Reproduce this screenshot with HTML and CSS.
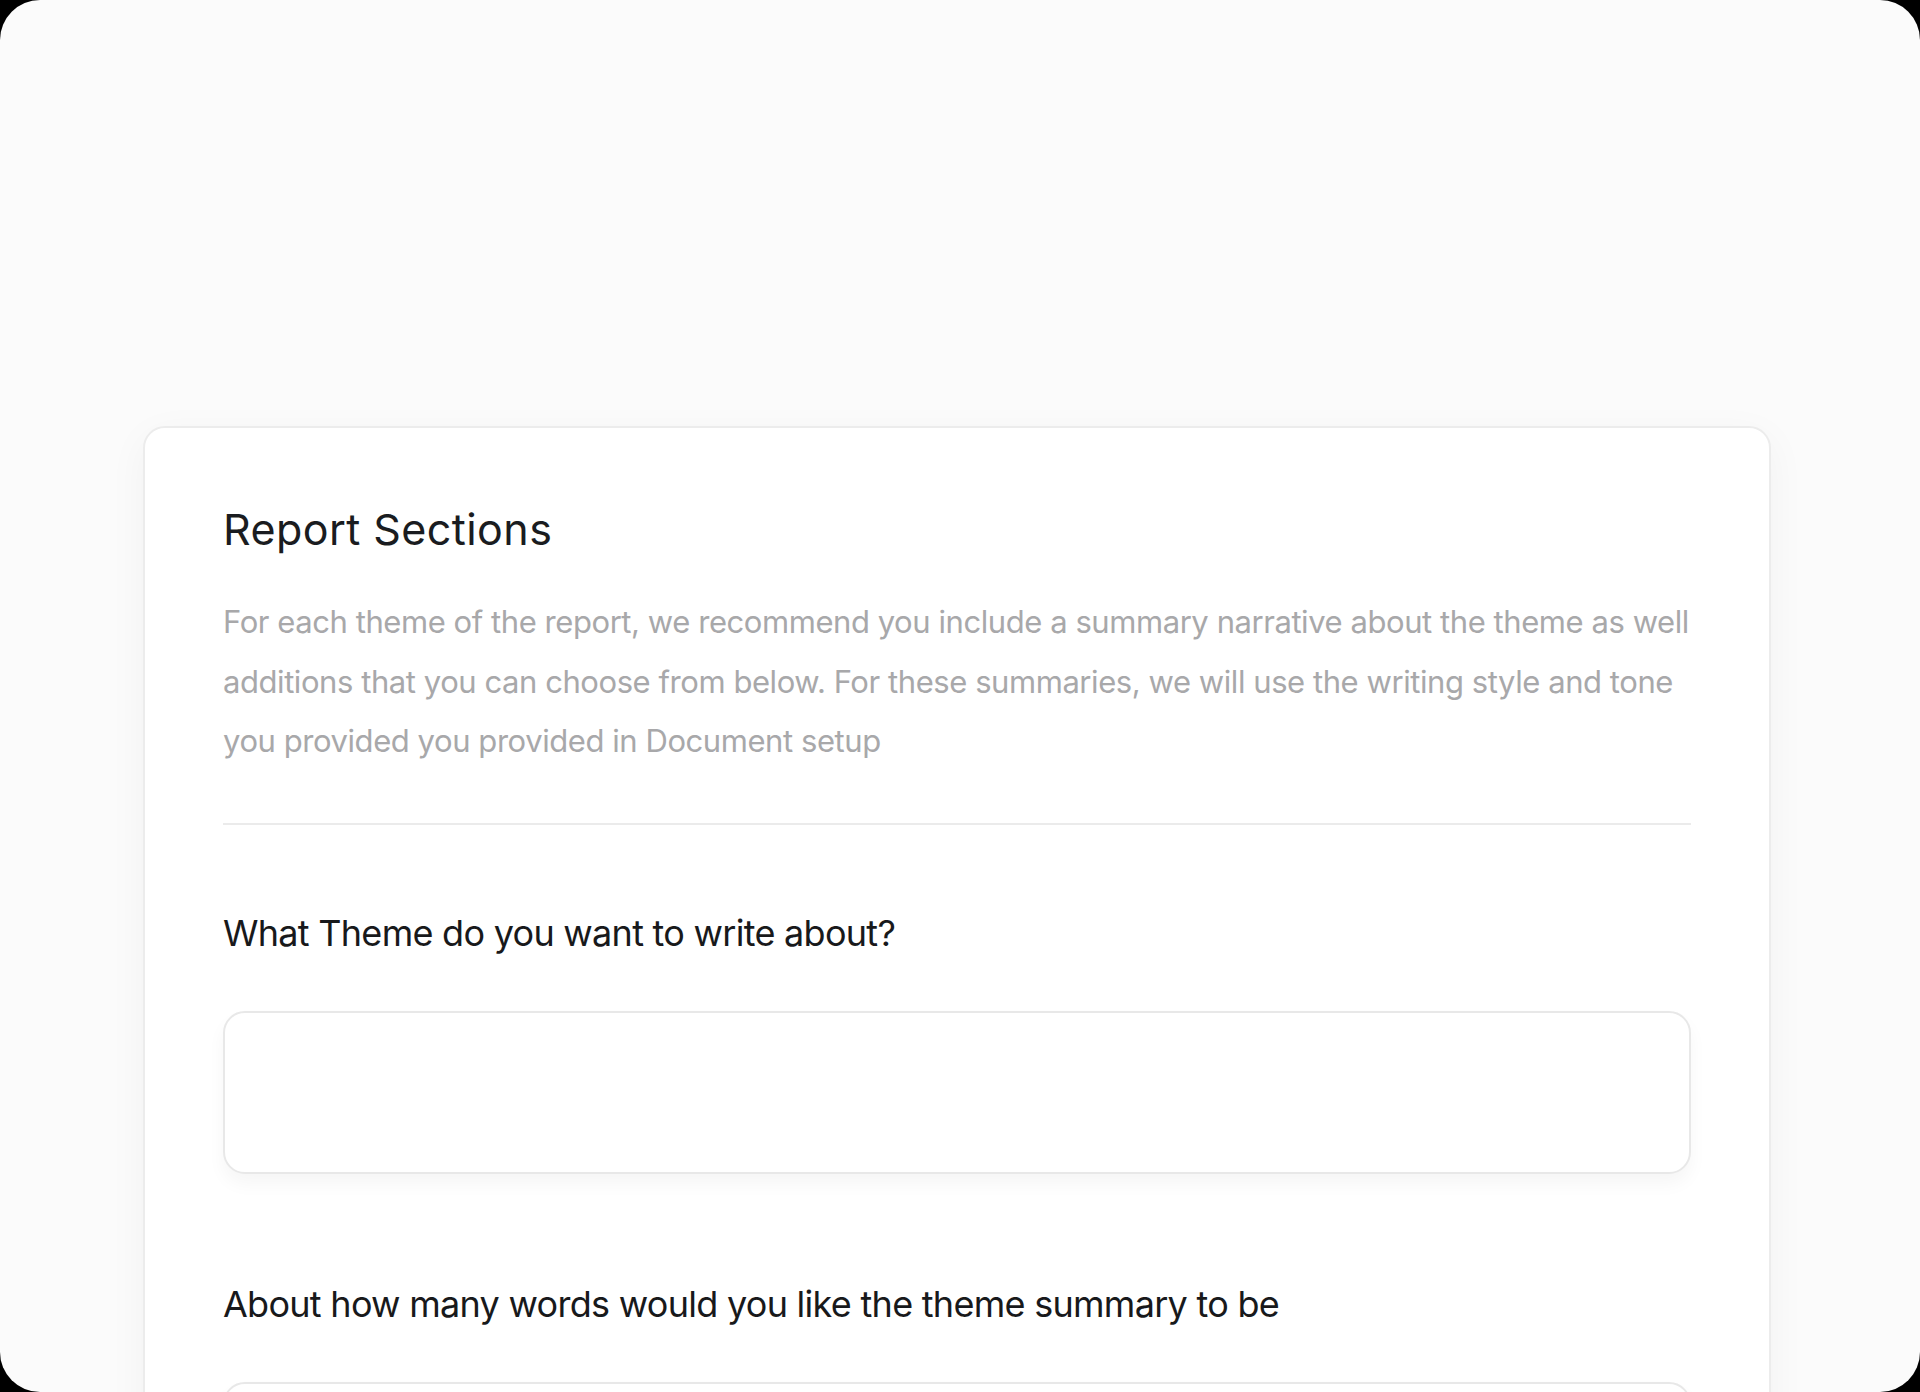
FILE: index.html
```html
<!DOCTYPE html>
<html lang="en">
<head>
  <meta charset="UTF-8" />
  <meta name="viewport" content="width=device-width, initial-scale=1.0"/>
  <title>Report Sections</title>
  <link rel="stylesheet" href="styles.css">
</head>
<body>

  <div class="frame">
    <div class="card">
      <h1 class="title">Report Sections</h1>
      <p class="intro">
        For each theme of the report, we recommend you include a summary narrative about the theme as well<br>
        additions that you can choose from below. For these summaries, we will use the writing style and tone<br>
        you provided you provided in Document setup
      </p>

      <hr class="divider">

      <div class="field">
        <label class="label" for="theme">What Theme do you want to write about?</label>
        <textarea class="box" id="theme"></textarea>
      </div>

      <div class="field">
        <label class="label" for="words">About how many words would you like the theme summary to be</label>
        <textarea class="box" id="words"></textarea>
      </div>
    </div>
  </div>

</body>
</html>
```

FILE: styles.css
```css
body {
  margin: 0;
  padding: 0;
  background: #000;
  font-family: 'Inter', 'Liberation Sans', sans-serif;
}

.frame {
  height: 1392px;
  background: #fbfbfb;
  border-radius: 40px;
  overflow: hidden;
  padding-top: 426px;
  box-sizing: border-box;
}

.card {
  width: 1628px;
  margin-left: 143px;
  box-sizing: border-box;
  background: #fff;
  border: 2px solid #ececec;
  border-radius: 22px;
  box-shadow: 0 10px 40px rgba(0,0,0,0.045);
  padding: 75px 78px 200px;
}

.title {
  margin: 0;
  font-size: 43px;
  line-height: 53px;
  font-weight: 400;
  letter-spacing: 0.01em;
  color: #1a1c20;
}

.intro {
  margin: 36px 0 0;
  font-size: 31px;
  line-height: 59.5px;
  letter-spacing: -0.014em;
  color: #a8a8aa;
  white-space: nowrap;
}

.divider {
  margin: 52px 0 0;
  border: none;
  height: 2px;
  background: #ebebeb;
}

.field {
  margin-top: 86px;
}

.field + .field {
  margin-top: 108px;
}

.label {
  display: block;
  font-size: 36px;
  line-height: 44px;
  letter-spacing: -0.02em;
  color: #18191b;
}

.box {
  display: block;
  margin-top: 56px;
  width: 100%;
  height: 163px;
  box-sizing: border-box;
  border: 2px solid #e8e8e8;
  border-radius: 22px;
  background: #fff;
  box-shadow: 0 10px 18px rgba(0,0,0,0.04);
  resize: none;
  font: inherit;
}
```
